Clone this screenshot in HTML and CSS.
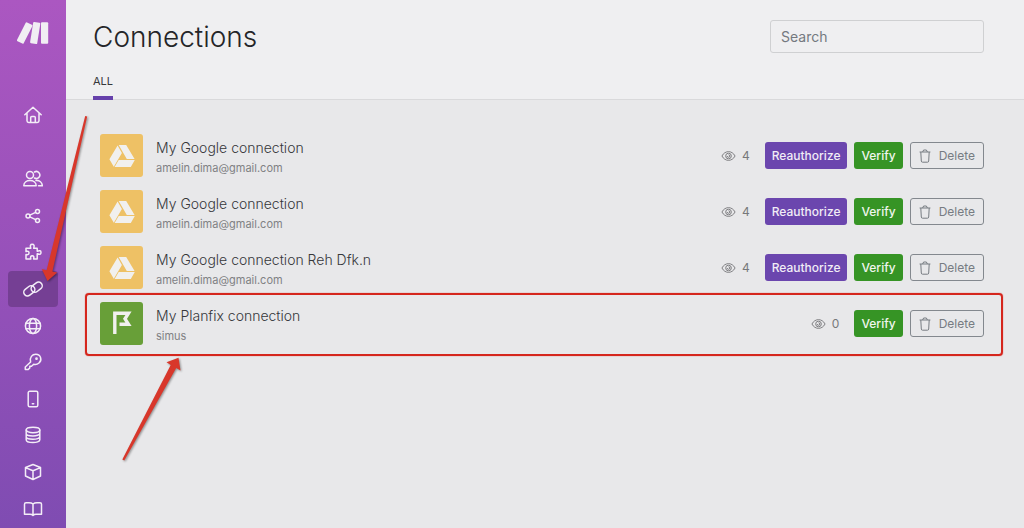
FILE: index.html
```html
<!DOCTYPE html>
<html lang="en">
<head>
<meta charset="utf-8">
<meta name="viewport" content="width=device-width, initial-scale=1">
<title>Connections</title>
<link rel="stylesheet" href="styles.css">
</head>
<body>
<svg class="sprite" aria-hidden="true">
  <symbol id="drive" viewBox="0 0 26 22">
    <path d="M8.600 .6 L12.900 8 L4.800 21.700 L.4 14.300Z M9.700 0 H17.200 L25.600 13.900 H17.800Z M9.700 15 H25.800 L21.800 22 H5.600Z"/>
  </symbol>
  <symbol id="flag" viewBox="0 0 20 25">
    <path d="M2.800 23 V2.300 H16.500 L13 7.800 L16.500 13.300 H7.500" fill="none" stroke="#f1f0ee" stroke-width="3.400"/>
  </symbol>
  <symbol id="eye" viewBox="0 0 16 12">
    <path d="M1 6 C4.200-.2 11.800-.2 15 6 C11.800 12.200 4.200 12.200 1 6Z"/><circle cx="8" cy="6" r="3"/><path d="M8 4.600 A1.400 1.400 0 1 1 6.600 6"/>
  </symbol>
  <symbol id="trash" viewBox="0 0 12 14">
    <path d="M.6 3 H11.400 M3.600 3 L4.600 1 H7.400 L8.400 3 M1.800 3 L2.300 12 Q2.400 13.200 3.500 13.200 H8.500 Q9.600 13.200 9.700 12 L10.200 3"/>
  </symbol>
</svg>
<div class="app">
  <nav class="sidebar" aria-label="Main">
    <a class="logo" href="#" aria-label="Make">
      <svg width="32" height="23" viewBox="0 0 32 23"><rect x="-3.700" y="-10.500" width="7.400" height="21" rx="1" transform="translate(7.700 11) rotate(27)"/><rect x="-3.600" y="-10.700" width="7.200" height="21.400" rx="1" transform="translate(18.200 11) rotate(9)"/><rect x="24" y=".3" width="7.200" height="21.400" rx="1"/></svg>
    </a>
    <a class="nav-link home" href="#" aria-label="Organization">
      <svg class="icon" viewBox="0 0 20 20"><path d="M1.800 9.800 L10 2.200 L18.200 9.800 M4 8 V15.800 Q4 17.500 5.700 17.500 H14.300 Q16 17.500 16 15.800 V8 M7.700 17.200 V12.500 Q7.700 11.500 8.700 11.500 H11.300 Q12.300 11.500 12.300 12.500 V17.200"/></svg>
    </a>
    <ul class="nav-list">
      <li><a class="nav-link" href="#" aria-label="Team"><svg class="icon" viewBox="0 0 20 20"><circle cx="7" cy="6" r="3.500"/><path d="M.8 16.800 C.8 9.800 13.200 9.800 13.200 16.800Z M11.500 3 A3.500 3.500 0 1 1 11.500 9 M13 11.600 C16.500 11.300 19.300 13.200 19.300 16.800 H15.500"/></svg></a></li>
      <li><a class="nav-link" href="#" aria-label="Scenarios"><svg class="icon" viewBox="0 0 20 20"><circle cx="5" cy="10" r="2"/><circle cx="14.500" cy="5.500" r="2"/><circle cx="14.500" cy="14.500" r="2"/><path d="M6.800 9.100 L12.700 6.400 M6.800 10.900 L12.700 13.600"/></svg></a></li>
      <li><a class="nav-link" href="#" aria-label="Templates"><svg class="icon" viewBox="0 0 20 20"><path d="M3 6.200 H7.800 Q6.500 2.300 9.200 2.300 Q12 2.300 10.700 6.200 H14.200 V9.200 Q18 7.700 18 10.500 Q18 13.200 14.200 11.800 V17 H10.600 Q11.500 13.800 9.200 13.800 Q7 13.800 7.800 17 H3 V12.500 Q6 13.200 6 10.800 Q6 8.700 3 9.500Z"/></svg></a></li>
      <li><a class="nav-link active" href="#" aria-label="Connections" aria-current="page"><svg class="icon" viewBox="0 0 20 20"><rect x="-6" y="-3.700" width="12" height="7.400" rx="3.700" transform="translate(6.300 11.800) rotate(-38)"/><rect x="-6" y="-3.700" width="12" height="7.400" rx="3.700" transform="translate(13.700 8.200) rotate(-38)"/></svg></a></li>
      <li><a class="nav-link" href="#" aria-label="Webhooks"><svg class="icon" viewBox="0 0 20 20"><circle cx="10" cy="10" r="7.600"/><ellipse cx="10" cy="10" rx="3.600" ry="7.600"/><path d="M3 7.300 H17 M3 12.700 H17"/></svg></a></li>
      <li><a class="nav-link" href="#" aria-label="Keys"><svg class="icon" viewBox="0 0 20 20"><path d="M7.600 10 C6.300 5.200 9.300 2.300 12.800 2.300 C18 2.300 19.300 8.200 16 11 C14.300 12.400 12.400 12.700 10.700 12.200 L8.500 14.200 H6.800 V16 L5 17.600 H2.300 V15Z"/><circle cx="13.500" cy="6.700" r=".6"/></svg></a></li>
      <li><a class="nav-link" href="#" aria-label="Devices"><svg class="icon" viewBox="0 0 20 20"><rect x="5.200" y="2.300" width="9.600" height="15.400" rx="1.500"/><path d="M9.300 14.800 H10.700"/></svg></a></li>
      <li><a class="nav-link" href="#" aria-label="Data stores"><svg class="icon" viewBox="0 0 20 20"><ellipse cx="10" cy="5" rx="6.800" ry="2.700"/><path d="M3.200 5 V14.700 C3.200 18.500 16.800 18.500 16.800 14.700 V5 M3.200 8.400 C3.200 11.700 16.800 11.700 16.800 8.400 M3.200 11.800 C3.200 15.100 16.800 15.100 16.800 11.800"/></svg></a></li>
      <li><a class="nav-link" href="#" aria-label="Data structures"><svg class="icon" viewBox="0 0 20 20"><path d="M10 2.500 L17.500 5.500 V14 L10 17.500 L2.500 14 V5.500Z M2.500 5.600 L10 8.700 L17.500 5.600 M10 8.700 V17.500"/></svg></a></li>
      <li><a class="nav-link" href="#" aria-label="Docs"><svg class="icon" viewBox="0 0 20 20"><path d="M10 5 Q8.500 3.700 6 3.700 H3 Q1.500 3.700 1.500 5.200 V15.300 H7 Q9 15.300 10 16.500 Q11 15.300 13 15.300 H18.500 V5.200 Q18.500 3.700 17 3.700 H14 Q11.500 3.700 10 5 V16.500"/></svg></a></li>
    </ul>
  </nav>
  <main class="main">
    <header class="header">
      <div class="title-row">
        <h1>Connections</h1>
        <input class="search" type="search" placeholder="Search" aria-label="Search">
      </div>
      <div class="tabs"><a class="tab" href="#" aria-current="page">ALL</a></div>
    </header>
    <ul class="connections">
      <li class="connection">
        <span class="badge"><svg class="drive"><use href="#drive"/></svg></span>
        <div class="details"><h2>My Google connection</h2><p>amelin.dima@gmail.com</p></div>
        <span class="usage"><svg class="eye"><use href="#eye"/></svg>4</span>
        <div class="actions"><button class="button primary">Reauthorize</button><button class="button success">Verify</button><button class="button outline"><svg class="trash"><use href="#trash"/></svg>Delete</button></div>
      </li>
      <li class="connection">
        <span class="badge"><svg class="drive"><use href="#drive"/></svg></span>
        <div class="details"><h2>My Google connection</h2><p>amelin.dima@gmail.com</p></div>
        <span class="usage"><svg class="eye"><use href="#eye"/></svg>4</span>
        <div class="actions"><button class="button primary">Reauthorize</button><button class="button success">Verify</button><button class="button outline"><svg class="trash"><use href="#trash"/></svg>Delete</button></div>
      </li>
      <li class="connection">
        <span class="badge"><svg class="drive"><use href="#drive"/></svg></span>
        <div class="details"><h2>My Google connection Reh Dfk.n</h2><p>amelin.dima@gmail.com</p></div>
        <span class="usage"><svg class="eye"><use href="#eye"/></svg>4</span>
        <div class="actions"><button class="button primary">Reauthorize</button><button class="button success">Verify</button><button class="button outline"><svg class="trash"><use href="#trash"/></svg>Delete</button></div>
      </li>
      <li class="connection highlighted">
        <span class="badge planfix"><svg class="flag"><use href="#flag"/></svg></span>
        <div class="details"><h2>My Planfix connection</h2><p>simus</p></div>
        <span class="usage"><svg class="eye"><use href="#eye"/></svg>0</span>
        <div class="actions"><button class="button success">Verify</button><button class="button outline"><svg class="trash"><use href="#trash"/></svg>Delete</button></div>
      </li>
    </ul>
  </main>
  <svg class="arrow arrow-nav" width="50" height="172" viewBox="0 0 50 172" aria-hidden="true"><path d="M46.200 2 L48.200 2.400 L13.400 157.400 L18.200 158.400 L8.500 167 L2.700 155 L7.600 156.200Z"/></svg>
  <svg class="arrow arrow-row" width="64" height="108" viewBox="0 0 64 108" aria-hidden="true"><path d="M2.300 104.500 L4.300 105.500 L56.200 13 L60.500 15.500 L58.500 2.700 L46.500 7.300 L50.700 10Z"/></svg>
</div>
</body>
</html>
```
FILE: styles.css
```css
* {
  box-sizing: border-box;
}

body {
  margin: 0;
  background: #e8e8ea;
  color: #36373a;
  font-family: Inter, "Liberation Sans", sans-serif;
}

h1,
h2,
p,
ul {
  margin: 0;
  padding: 0;
}

ul {
  list-style: none;
}

a {
  color: inherit;
  text-decoration: none;
}

.sprite {
  position: absolute;
  width: 0;
  height: 0;
}

.app {
  position: relative;
  display: flex;
  min-height: 100vh;
}

.sidebar {
  display: flex;
  flex: none;
  flex-direction: column;
  width: 66px;
  padding: 22px 8px 1px;
  background: linear-gradient(#ab57c1, #9b52bb 40%, #7f4cb2);
  color: #f3edf7;
}

.logo {
  display: flex;
  justify-content: center;
  fill: #f1eef3;
}

.home {
  height: 36px;
  margin: 52px 0 28px;
}

.nav-list {
  display: flex;
  flex: 1;
  flex-direction: column;
}

.nav-list li {
  display: flex;
  flex: 1;
}

.nav-link {
  display: flex;
  flex: 1;
  align-items: center;
  justify-content: center;
  min-height: 36px;
  border-radius: 4px;
}

.home.nav-link {
  flex: none;
}

.active {
  background: #753f94;
}

.icon {
  width: 20px;
  height: 20px;
  fill: none;
  stroke: currentColor;
  stroke-width: 1.5;
  stroke-linecap: round;
  stroke-linejoin: round;
}

.main {
  flex: 1;
  min-width: 0;
}

.header {
  padding: 20px 40px 0 27px;
  border-bottom: 1px solid #d9d9db;
  background: #efeff1;
}

.title-row {
  display: flex;
  align-items: center;
  justify-content: space-between;
}

h1 {
  color: #242528;
  font-size: 28px;
  font-weight: 300;
  line-height: 32px;
}

.search {
  width: 214px;
  height: 33px;
  padding: 0 10px;
  border: 1px solid #cfd0d2;
  border-radius: 3px;
  background: transparent;
  color: #36373a;
  font: 14px Inter, "Liberation Sans", sans-serif;
}

.search::placeholder {
  color: #747980;
  opacity: 1;
}

.tabs {
  display: flex;
  padding-top: 20px;
}

.tab {
  margin-bottom: -1px;
  padding-bottom: 7px;
  border-bottom: 4px solid #6641ab;
  font-size: 11px;
  line-height: 16px;
}

.connections {
  display: grid;
  gap: 13px;
  padding: 34px 40px 34px 34px;
}

.connection {
  position: relative;
  display: flex;
  align-items: center;
}

.highlighted::after {
  position: absolute;
  inset: -9px -19px -11px -15px;
  border: 2px solid #d5261d;
  border-radius: 4px;
  box-shadow: 0 0 1px #d5261d;
  content: "";
  pointer-events: none;
}

.badge {
  display: flex;
  align-items: center;
  justify-content: center;
  width: 43px;
  height: 43px;
  margin-right: 13px;
  border-radius: 3px;
  background: #eec165;
  fill: #f1f0ee;
}

.planfix {
  background: #689f38;
}

.drive {
  width: 26px;
  height: 22px;
}

.flag {
  width: 20px;
  height: 25px;
}

.details {
  flex: 1;
  min-width: 0;
  padding-top: 2px;
}

h2 {
  font-size: 14px;
  font-weight: 300;
  line-height: 22px;
}

p {
  color: #808184;
  font-size: 11px;
  line-height: 18px;
}

.usage {
  display: flex;
  align-items: center;
  gap: 6px;
  margin-right: 15px;
  color: #77787b;
  font-size: 12px;
}

.eye {
  width: 15px;
  height: 12px;
  fill: none;
  stroke: currentColor;
}

.actions {
  display: flex;
  gap: 7px;
}

.button {
  display: flex;
  align-items: center;
  height: 27px;
  padding: 0 6px;
  border: 1px solid transparent;
  border-radius: 3px;
  font: 500 12px Inter, "Liberation Sans", sans-serif;
}

.primary {
  background: #6b46ae;
  color: #f1edf6;
}

.success {
  background: #369425;
  color: #f0f6ee;
}

.outline {
  gap: 8px;
  padding: 0 8px;
  border-color: #83888e;
  background: transparent;
  color: #777c82;
  font-weight: 400;
}

.trash {
  width: 12px;
  height: 14px;
  fill: none;
  stroke: currentColor;
}

.arrow {
  position: absolute;
  fill: #d8372b;
  filter: drop-shadow(1px 1px 1px #0006);
  pointer-events: none;
}

.arrow-nav {
  top: 114px;
  left: 39px;
}

.arrow-row {
  top: 355px;
  left: 120px;
}
```
